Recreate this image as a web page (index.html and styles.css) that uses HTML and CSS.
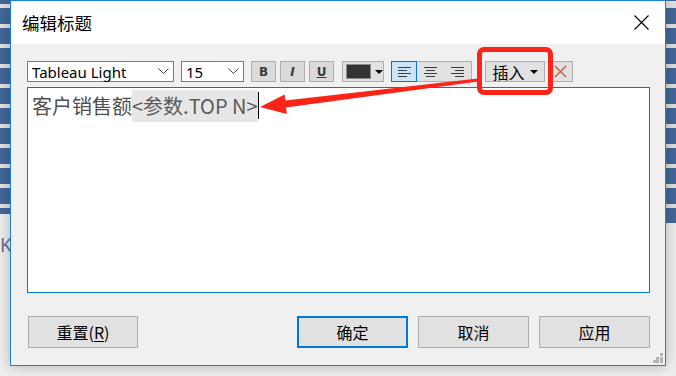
FILE: index.html
```html
<!DOCTYPE html>
<html lang="zh-CN">
<head>
	<meta charset="UTF-8">
	<title>编辑标题</title>
	<link rel="stylesheet" href="styles.css">
</head>
<body>
	<div class="desk">
		<div class="strip strip_left"></div>
		<div class="strip strip_right"></div>
		<span class="peek">K</span>

		<div class="dialog">
			<div class="titlebar">
				<span class="title">编辑标题</span>
				<svg class="close" width="15" height="15" viewBox="0 0 15 15">
					<path d="M0.5 0.5L14.5 14.5M14.5 0.5L0.5 14.5" stroke="#000" stroke-width="1.1" fill="none"/>
				</svg>
			</div>

			<div class="content">
				<div class="toolbar">
					<div class="select font_select">
						<span>Tableau Light</span>
						<svg width="11" height="7" viewBox="0 0 11 7"><path d="M0.5 0.5L5.5 5.5L10.5 0.5" stroke="#444" fill="none"/></svg>
					</div>
					<div class="select size_select">
						<span>15</span>
						<svg width="11" height="7" viewBox="0 0 11 7"><path d="M0.5 0.5L5.5 5.5L10.5 0.5" stroke="#444" fill="none"/></svg>
					</div>
					<div class="btn fmt bold">B</div>
					<div class="btn fmt italic">I</div>
					<div class="btn fmt under">U</div>
					<div class="btn color_btn">
						<span class="swatch"></span>
						<span class="caret"></span>
					</div>
					<div class="align_group">
						<div class="align active">
							<svg width="13" height="10" viewBox="0 0 13 10"><path d="M0 0.5H13M0 3.5H9M0 6.5H13M0 9.5H9" stroke="#3c3c3c"/></svg>
						</div>
						<div class="align">
							<svg width="13" height="10" viewBox="0 0 13 10"><path d="M0 0.5H13M2 3.5H11M0 6.5H13M2 9.5H11" stroke="#3c3c3c"/></svg>
						</div>
						<div class="align">
							<svg width="13" height="10" viewBox="0 0 13 10"><path d="M0 0.5H13M4 3.5H13M0 6.5H13M4 9.5H13" stroke="#3c3c3c"/></svg>
						</div>
					</div>
					<div class="btn insert">插入<span class="caret"></span></div>
					<div class="btn clear">
						<svg width="13" height="13" viewBox="0 0 13 13"><path d="M1 1L12 12M12 1L1 12" stroke="#c5664e" stroke-width="1.6" fill="none"/></svg>
					</div>
				</div>

				<div class="editor">
					<span class="plain">客户销售额</span><span class="field">&lt;参数.TOP N&gt;</span><span class="cursor"></span>
				</div>

				<div class="actions">
					<div class="btn action reset">重置(<u>R</u>)</div>
					<div class="btn action primary">确定</div>
					<div class="btn action">取消</div>
					<div class="btn action">应用</div>
				</div>
			</div>
			<div class="grip"></div>
		</div>

		<!-- annotation: box round the insert button, arrow to the cursor -->
		<div class="callout"></div>
		<svg class="arrow" width="676" height="376" viewBox="0 0 676 376">
			<polygon points="478.2,81.5 286,107.5 286.8,114 260,107 284.6,94.5 285.4,100.5 477.9,78.5" fill="#fa2418"/>
		</svg>
	</div>
</body>
</html>
```

FILE: styles.css
```css
*{
	margin: 0;
	padding: 0;
	box-sizing: border-box;
}
body {
	font-family: "Noto Sans", "Noto Sans CJK SC", sans-serif;
	background-color: #f0f0f0;
}
.desk {
	position: relative;
	width: 676px;
	height: 376px;
	overflow: hidden;
	background-color: #f0f0f0;
}
.strip {
	position: absolute;
	top: 0;
	width: 10px;
	background-image: repeating-linear-gradient(to bottom, #e4e4e4 0, #e4e4e4 4px, #45699a 4px, #45699a 20px);
	background-position: 0 4px;
}
.strip_left {
	left: 0;
	height: 214px;
}
.strip_right {
	right: 0;
	height: 223px;
}
.peek {
	position: absolute;
	left: 0;
	top: 232px;
	font-size: 19px;
	color: #6e6a8c;
}

/* dialog window */
.dialog {
	position: absolute;
	left: 10px;
	top: 0;
	width: 656px;
	height: 366px;
	border: 1px solid #1783d8;
	background-color: #f0f0f0;
	box-shadow: 0 0 14px rgba(0,0,0,0.28);
	display: flex;
	flex-direction: column;
}
.titlebar {
	height: 43px;
	background-color: #fff;
	display: flex;
	align-items: center;
	padding-left: 11px;
	padding-right: 16px;
}
.title {
	font-family: "Noto Sans CJK SC", sans-serif;
	font-size: 17.5px;
	color: #000;
	flex: 1;
}
.content {
	flex: 1;
	padding: 17px 15px 0 16px;
}

/* toolbar */
.toolbar {
	display: flex;
	align-items: center;
	height: 21px;
}
.select {
	height: 21px;
	border: 1px solid #7a7a7a;
	background-color: #fff;
	display: flex;
	align-items: center;
	justify-content: space-between;
	padding: 0 4px 0 4px;
	font-size: 15px;
	color: #000;
	margin-right: 7px;
}
.font_select {
	width: 147px;
}
.size_select {
	width: 63px;
}
.btn {
	background-color: #e1e1e1;
	border: 1px solid #adadad;
	display: flex;
	align-items: center;
	justify-content: center;
	color: #000;
}
.fmt {
	width: 25px;
	height: 21px;
	margin-right: 4px;
	font-family: "DejaVu Sans", sans-serif;
	font-weight: bold;
	font-size: 12px;
	color: #3a3a3a;
	background-color: #dadada;
}
.italic {
	font-style: italic;
}
.under {
	text-decoration: underline;
	margin-right: 8px;
}
.color_btn {
	width: 42px;
	height: 21px;
	justify-content: flex-start;
	padding-left: 3px;
	margin-right: 7px;
}
.swatch {
	width: 27px;
	height: 15px;
	background-color: #333;
	border: 1px solid #8a8a8a;
}
.caret {
	width: 0;
	height: 0;
	border-left: 4px solid transparent;
	border-right: 4px solid transparent;
	border-top: 4px solid #000;
	margin-left: 4px;
}
.align_group {
	display: flex;
	width: 81px;
	height: 21px;
	border: 1px solid #adadad;
	background-color: #e1e1e1;
	margin-right: 13px;
}
.align {
	flex: 1;
	display: flex;
	align-items: center;
	justify-content: center;
}
.align.active {
	flex: 0 0 26px;
	margin: -1px 0 -1px -1px;
	border: 1px solid #0078d7;
	background-color: #cce4f7;
}
.insert {
	width: 60px;
	height: 21px;
	font-family: "Noto Sans CJK SC", sans-serif;
	font-size: 16px;
	margin-right: 3px;
}
.insert .caret {
	margin-left: 5px;
}
.clear {
	width: 25px;
	height: 21px;
}

/* editor */
.editor {
	margin-top: 5px;
	width: 623px;
	height: 206px;
	background-color: #fff;
	border: 1px solid #0078d7;
	padding: 2px 4px;
	font-family: "Noto Sans CJK SC", sans-serif;
	font-size: 20px;
	color: #505050;
	display: flex;
	align-items: flex-start;
}
.plain, .field {
	height: 32px;
	line-height: 32px;
}
.field {
	background-color: #e6e6e6;
	color: #5a5a5a;
}
.cursor {
	width: 1px;
	height: 27px;
	margin-top: 2px;
	background-color: #000;
}

/* bottom buttons */
.actions {
	margin-top: 23px;
	display: flex;
	padding-left: 1px;
	gap: 10px;
}
.action {
	width: 111px;
	height: 32px;
	font-family: "Noto Sans CJK SC", sans-serif;
	font-size: 16px;
}
.action.reset {
	width: 110px;
}
.action u {
	text-decoration-thickness: 1px;
	text-underline-offset: 2px;
}
.action.primary {
	margin-left: auto;
	border: 2px solid #0078d7;
}
.grip {
	position: absolute;
	right: 2px;
	bottom: 2px;
	width: 10px;
	height: 10px;
	background-image:
		linear-gradient(#b3b3b3, #b3b3b3),
		linear-gradient(#b3b3b3, #b3b3b3),
		linear-gradient(#b3b3b3, #b3b3b3),
		linear-gradient(#b3b3b3, #b3b3b3),
		linear-gradient(#b3b3b3, #b3b3b3),
		linear-gradient(#b3b3b3, #b3b3b3);
	background-size: 3px 3px;
	background-repeat: no-repeat;
	background-position: 7px 0, 3px 4px, 7px 4px, 0 7px, 3px 7px, 7px 7px;
}

/* annotation overlay */
.callout {
	position: absolute;
	left: 477px;
	top: 47px;
	width: 76px;
	height: 48px;
	border: 5px solid #fa2418;
	border-radius: 7px;
}
.arrow {
	position: absolute;
	left: 0;
	top: 0;
}
```
